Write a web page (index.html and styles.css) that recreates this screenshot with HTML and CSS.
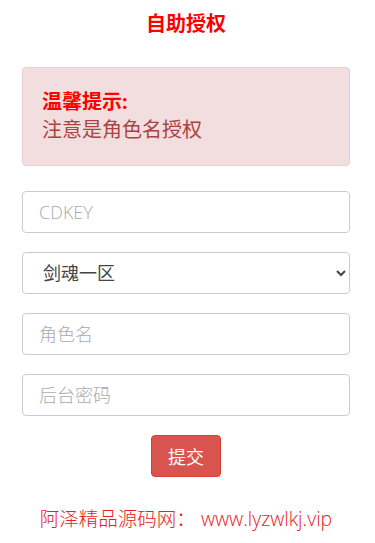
FILE: index.html
```html
<!DOCTYPE html>
<html lang="zh-CN">
<head>
  <meta charset="UTF-8">
  <meta name="viewport" content="width=device-width, initial-scale=1.0">
  <title>自助授权</title>
  <link rel="stylesheet" href="styles.css">
</head>
<body>
  <div class="container">
    <h3 class="title">自助授权</h3>

    <div class="alert">
      <strong>温馨提示:</strong>
      <div>注意是角色名授权</div>
    </div>

    <form class="auth-form" onsubmit="return false;">
      <input type="text" class="form-control" placeholder="CDKEY">
      <select class="form-control">
        <option>剑魂一区</option>
      </select>
      <input type="text" class="form-control" placeholder="角色名">
      <input type="password" class="form-control pwd" placeholder="后台密码">
      <button type="submit" class="btn-submit">提交</button>
    </form>

    <p class="copyright">阿泽精品源码网： www.lyzwlkj.vip</p>
  </div>
</body>
</html>
```

FILE: styles.css
```css
body {
  margin: 0;
  font-family: "Open Sans", "Noto Sans CJK SC", sans-serif;
  font-size: 18px;
  color: #333;
  background-color: #fff;
}

.container {
  padding: 0 25px 0 22px;
}

.title {
  margin: 10px 0 0;
  font-size: 20px;
  line-height: 28px;
  font-weight: bold;
  color: #f00;
  text-align: center;
}

.alert {
  margin-top: 29px;
  padding: 20px 19px 21px;
  background-color: #f2dede;
  border: 1px solid #ebccd1;
  border-radius: 4px;
  color: #a94442;
  font-size: 20px;
  line-height: 28px;
}

.alert strong {
  display: block;
  color: #f00;
  font-weight: bold;
}

.auth-form {
  display: flex;
  flex-direction: column;
  gap: 19px;
  margin-top: 25px;
}

.form-control {
  box-sizing: border-box;
  width: 100%;
  height: 42px;
  padding: 0 16px;
  font-family: inherit;
  font-size: 18px;
  color: #333;
  background-color: #fff;
  border: 1px solid #ccc;
  border-radius: 4px;
  outline: none;
}

.form-control::placeholder {
  color: #aaa;
  font-weight: 300;
}

select.form-control {
  padding: 0 4px 0 16px;
  color: #444;
}

.btn-submit {
  align-self: center;
  height: 42px;
  padding: 0 16px;
  font-family: inherit;
  font-size: 18px;
  color: #fff;
  background-color: #d9534f;
  border: 1px solid #d43f3a;
  border-radius: 4px;
  cursor: pointer;
}

.copyright {
  margin: 28px 0 0;
  text-align: center;
  color: #e82020;
  font-weight: 300;
  font-size: 19.5px;
  line-height: 28px;
}
```
